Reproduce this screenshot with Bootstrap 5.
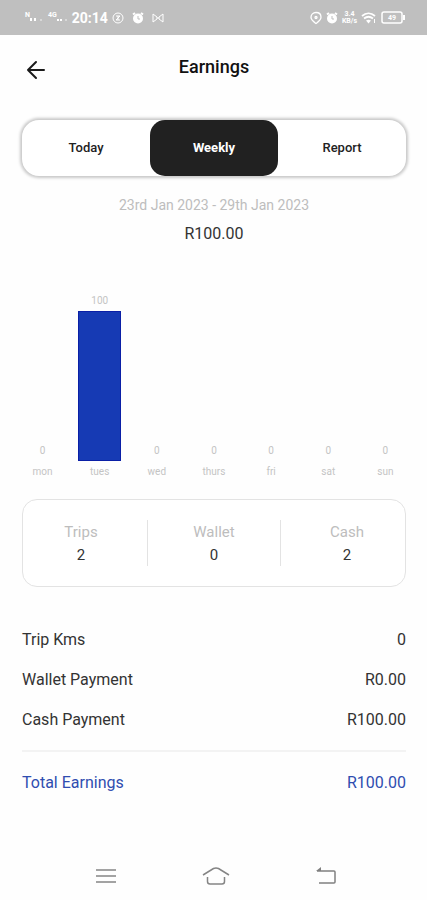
<!DOCTYPE html>
<html lang="en">
<head>
<meta charset="utf-8">
<meta name="viewport" content="width=device-width, initial-scale=1">
<title>Earnings</title>
<link href="https://cdn.jsdelivr.net/npm/bootstrap@5.3.0/dist/css/bootstrap.min.css" rel="stylesheet">
<style>
  body { font-family: Roboto, "Liberation Sans", sans-serif; font-size: 16px; line-height: 20px; color: #333; background: #fefefe; }
  .status-bar { height: 35px; padding: 0 22px 0 25px; background: #bfbfbf; color: #fff; }
  .clock { font-size: 14px; font-weight: 700; }
  .signal { font-size: 7px; line-height: 7px; font-weight: 700; }
  .page-head { display: grid; grid-template-columns: 28px 1fr 28px; padding: 20px 21px 0 22px; height: 84px; }
  .page-head h1 { font-size: 18px; line-height: 24px; font-weight: 500; color: #111; }
  .back-btn { height: 28px; margin-top: 1px; }
  .page-body { padding: 0 21px 0 22px; }
  .period-tabs { border-radius: 17px; box-shadow: 0 0 3px 2px #c8c8c8; background: #fff; margin-top: 1px; }
  .period-tabs .nav-link { flex: 1 1 0; height: 56px; border-radius: 15px; font-size: 13px; font-weight: 500; color: #222; padding: 0; }
  .period-tabs .nav-link.active { background: #212121; color: #fff; font-weight: 700; }
  .faint { color: #bdbdbd; }
  .period { font-size: 14px; margin-top: 19px; }
  .period-total { margin-top: 9px; }
  .chart { margin: 50px -8px 0; }
  .chart-plot { height: 167px; }
  .chart-text { font-size: 10px; line-height: 14px; color: #c4c4c4; }
  .chart-bar { width: 75%; margin-top: 3px; background: #163ab4; border: 1px solid #0a1fa6; }
  .chart-value-zero { margin-bottom: 3px; }
  .chart-day { margin-top: 4px; }
  .summary { margin-top: 20px; padding: 20px 0; border: 1px solid #e3e3e3; border-radius: 15px; background: #fff; }
  .summary > div { height: 46px; }
  .summary > div:first-child { margin-left: -8px; }
  .summary > div:last-child { margin-right: -8px; }
  .summary > div + div { border-left: 1px solid #e3e3e3; }
  .summary dt { font-size: 15px; font-weight: 400; line-height: 24px; }
  .summary dd { font-size: 15px; line-height: 22px; }
  .breakdown { margin-top: 43px; }
  .breakdown .line + .line { margin-top: 20px; }
  .breakdown .total { margin-top: 20px; padding-top: 21px; border-top: 2px solid #f3f3f3; color: #2f4db0; }
  .system-nav { height: 50px; padding: 0 46px 0 51px; }
</style>
<script src="https://cdn.jsdelivr.net/npm/bootstrap@5.3.0/dist/js/bootstrap.bundle.min.js"></script>
</head>
<body class="d-flex flex-column min-vh-100">
  <div class="status-bar d-flex align-items-center justify-content-between">
    <div class="d-flex align-items-center gap-1">
      <span class="signal d-flex">N<svg width="14" height="12" viewBox="0 0 14 12" fill="#fff" aria-hidden="true"><path d="M0 6h2v3H0zM4 6h2v3H4z"/><path d="M10 7h2v2h-2z" opacity=".4"/></svg></span>
      <span class="signal d-flex">4G<svg width="11" height="12" viewBox="0 0 11 12" fill="#fff" aria-hidden="true"><path d="M0 7h2v2H0zM3 7h2v2H3z"/><path d="M8 7h2v2H8z" opacity=".4"/></svg></span>
      <span class="clock">20:14</span>
      <svg width="12" height="12" viewBox="0 0 12 12" fill="none" stroke="#fff" aria-hidden="true"><circle cx="6" cy="6" r="5"/><path d="M4 4h4L4 8h4M6 4v4"/></svg>
      <svg class="ms-1" width="12" height="12" viewBox="0 0 12 12" aria-hidden="true"><circle cx="6" cy="6.500" r="5" fill="#fff"/><path d="M1 2.500 3 1M11 2.500 9 1" stroke="#fff" stroke-width="2"/><path d="M6 4v3h2" fill="none" stroke="#bfbfbf"/></svg>
      <svg class="ms-1" width="12" height="12" viewBox="0 0 12 12" fill="none" stroke="#fff" aria-hidden="true"><path d="M1 2v8l4-3V5zM11 2v8L7 7V5zM5 6h2"/></svg>
    </div>
    <div class="d-flex align-items-center gap-1">
      <svg width="12" height="14" viewBox="0 0 12 14" fill="none" stroke="#fff" stroke-width="1.300" aria-hidden="true"><path d="M6 1.500c3 0 5 2 5 4.800C11 9 8 11 6 12.500 4 11 1 9 1 6.300c0-2.800 2-4.800 5-4.800z"/><circle cx="6" cy="6.500" r="1"/></svg>
      <svg width="12" height="12" viewBox="0 0 12 12" aria-hidden="true"><circle cx="6" cy="6.500" r="5" fill="#fff"/><path d="M1 2.500 3 1M11 2.500 9 1" stroke="#fff" stroke-width="2"/><path d="M6 4v3h2" fill="none" stroke="#bfbfbf"/></svg>
      <span class="signal text-center">3.4<br>KB/s</span>
      <svg width="16" height="12" viewBox="0 0 16 12" fill="none" stroke="#fff" stroke-width="1.800" aria-hidden="true"><path d="M1 4c4-3.500 9-3.500 13 0M3 6.500c3-2.300 6-2.300 9 0"/><path d="M5 8.500c2-1 3-1 5 0l-2.500 3z" fill="#fff" stroke="none"/><path d="M13.500 7v4" stroke-width="1"/></svg>
      <svg width="24" height="13" viewBox="0 0 24 13" aria-label="Battery 49"><rect x="1" y="1" width="20" height="11" rx="2" fill="none" stroke="#fff" stroke-width="1.500"/><path d="M22 4h2v5h-2z" fill="#fff"/><text x="11" y="9" font-size="7" font-weight="700" text-anchor="middle" fill="#fff">49</text></svg>
    </div>
  </div>

  <header class="page-head">
    <button class="back-btn btn p-0 border-0 d-flex align-items-center justify-content-center" type="button" aria-label="Back">
      <svg width="20" height="20" viewBox="0 0 20 20" fill="none" stroke="#1a1a1a" stroke-width="2" stroke-linecap="round" stroke-linejoin="round" aria-hidden="true"><path d="M18 10H2M10 2 2 10l8 8"/></svg>
    </button>
    <h1 class="text-center m-0">Earnings</h1>
  </header>

  <main class="page-body flex-grow-1">
    <div class="period-tabs nav nav-pills flex-nowrap" role="tablist">
      <button class="nav-link" type="button" role="tab" aria-selected="false">Today</button>
      <button class="nav-link active" type="button" role="tab" aria-selected="true">Weekly</button>
      <button class="nav-link" type="button" role="tab" aria-selected="false">Report</button>
    </div>

    <p class="period faint text-center mb-0">23rd Jan 2023 - 29th Jan 2023</p>
    <p class="period-total text-center mb-0">R100.00</p>

    <div class="chart d-flex text-center">
      <div class="col chart-text"><div class="chart-plot d-flex flex-column justify-content-end"><span class="chart-value-zero">0</span></div><div class="chart-day">mon</div></div>
      <div class="col chart-text"><div class="chart-plot d-flex flex-column align-items-center"><span>100</span><div class="chart-bar flex-grow-1"></div></div><div class="chart-day">tues</div></div>
      <div class="col chart-text"><div class="chart-plot d-flex flex-column justify-content-end"><span class="chart-value-zero">0</span></div><div class="chart-day">wed</div></div>
      <div class="col chart-text"><div class="chart-plot d-flex flex-column justify-content-end"><span class="chart-value-zero">0</span></div><div class="chart-day">thurs</div></div>
      <div class="col chart-text"><div class="chart-plot d-flex flex-column justify-content-end"><span class="chart-value-zero">0</span></div><div class="chart-day">fri</div></div>
      <div class="col chart-text"><div class="chart-plot d-flex flex-column justify-content-end"><span class="chart-value-zero">0</span></div><div class="chart-day">sat</div></div>
      <div class="col chart-text"><div class="chart-plot d-flex flex-column justify-content-end"><span class="chart-value-zero">0</span></div><div class="chart-day">sun</div></div>
    </div>

    <dl class="summary d-flex text-center mb-0">
      <div class="col"><dt class="faint">Trips</dt><dd class="mb-0">2</dd></div>
      <div class="col"><dt class="faint">Wallet</dt><dd class="mb-0">0</dd></div>
      <div class="col"><dt class="faint">Cash</dt><dd class="mb-0">2</dd></div>
    </dl>

    <div class="breakdown">
      <div class="line d-flex justify-content-between"><span>Trip Kms</span><span>0</span></div>
      <div class="line d-flex justify-content-between"><span>Wallet Payment</span><span>R0.00</span></div>
      <div class="line d-flex justify-content-between"><span>Cash Payment</span><span>R100.00</span></div>
      <div class="total d-flex justify-content-between"><span>Total Earnings</span><span>R100.00</span></div>
    </div>
  </main>

  <nav class="system-nav d-flex align-items-center" aria-label="System">
    <button class="btn p-0 border-0 col" type="button" aria-label="Recent apps"><svg width="20" height="16" viewBox="0 0 20 16" stroke="#858585" stroke-width="1.500" aria-hidden="true"><path d="M0 2h20M0 8h20M0 14h20"/></svg></button>
    <button class="btn p-0 border-0 col" type="button" aria-label="Home"><svg width="28" height="18" viewBox="0 0 28 18" fill="none" stroke="#858585" stroke-width="1.500" aria-hidden="true"><path d="M1 8 11.500 1.500q2.500-1 5 0L27 8M5.500 10v4.500q0 2.500 2.500 2.500h12q2.500 0 2.500-2.500V10"/></svg></button>
    <button class="btn p-0 border-0 col" type="button" aria-label="Go back"><svg width="20" height="18" viewBox="0 0 20 18" fill="none" stroke="#808080" stroke-width="1.500" aria-hidden="true"><path d="M1 4h17q1 0 1 1v10q0 1-1 1H3"/><path d="M0 4 5 0v4z" fill="#808080" stroke="none"/></svg></button>
  </nav>
</body>
</html>
